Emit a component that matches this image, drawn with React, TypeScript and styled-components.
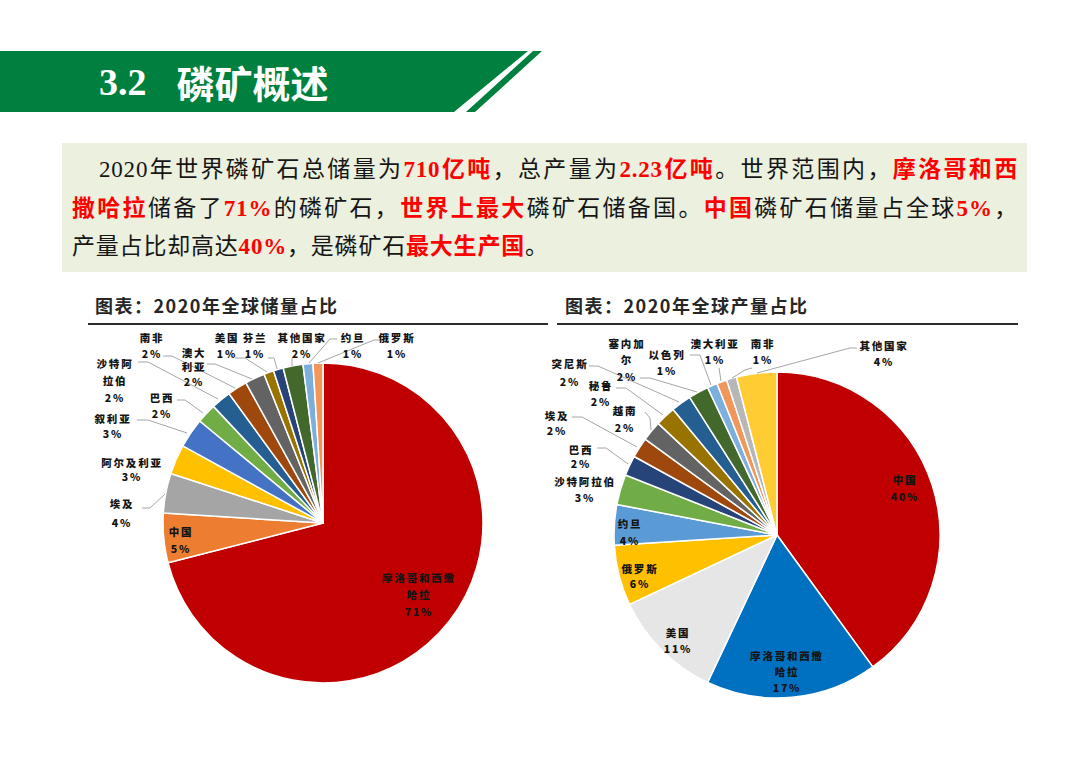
import type { FC } from "react";
import styled, { createGlobalStyle } from "styled-components";

const GlobalStyle = createGlobalStyle`
  html, body {
    margin: 0;
    padding: 0;
    background: #ffffff;
  }
  body {
    width: 1080px;
    height: 764px;
    overflow: hidden;
    font-family: "Noto Sans CJK SC", "Noto Sans", sans-serif;
  }
`;

const Page = styled.div`
  width: 1080px;
  height: 764px;
  display: flex;
  flex-direction: column;
`;

const Banner = styled.div`
  margin-top: 51px;
  width: 545px;
  height: 61px;
  box-sizing: border-box;
  padding-left: 99px;
  display: flex;
  align-items: center;
  gap: 30px;
  background: #00803e;
  color: #ffffff;
  clip-path: polygon(evenodd, 0 0, 528px 0, 454px 100%, 466px 100%, 533px 0, 542px 0, 475px 100%, 0 100%);
`;

const SectionNo = styled.span`
  font-family: "Liberation Serif", serif;
  font-weight: 700;
  font-size: 38px;
  line-height: 1;
`;

const SectionName = styled.span`
  font-family: "Noto Sans CJK SC", sans-serif;
  font-weight: 700;
  font-size: 38px;
  line-height: 1;
`;

const Summary = styled.div`
  margin: 31px 0 0 62px;
  width: 965px;
  height: 129px;
  box-sizing: border-box;
  padding: 8px 9px 0 10px;
  background: #ebf0df;
  font-family: "Liberation Serif", "Noto Sans CJK SC", serif;
  font-size: 23px;
  line-height: 38.5px;
  letter-spacing: 0.8px;
  color: #161616;
`;

const Line = styled.div<{ $indent?: boolean; $full?: boolean }>`
  text-indent: ${p => (p.$indent ? "27px" : "0")};
  text-align: ${p => (p.$full ? "justify" : "left")};
  text-align-last: ${p => (p.$full ? "justify" : "auto")};
`;

const Red = styled.span`
  color: #ff0000;
  font-weight: 700;
`;

const ChartRow = styled.div`
  display: flex;
  gap: 9px;
  margin: 21px 0 0 88px;
`;

const ChartPanel = styled.div<{ $width: number }>`
  width: ${p => p.$width}px;
  display: flex;
  flex-direction: column;
`;

const ChartTitle = styled.div<{ $inset: number }>`
  padding-left: ${p => p.$inset}px;
  font-family: "Noto Sans CJK SC", sans-serif;
  font-weight: 700;
  font-size: 18px;
  line-height: 24px;
  letter-spacing: 1.5px;
  color: #262626;
`;

const Rule = styled.div`
  margin-top: 6px;
  height: 2px;
  background: #2b2b2b;
`;

const PieSvg = styled.svg`
  display: block;
  overflow: visible;
`;

const LabelText = styled.text`
  font-family: "Noto Sans CJK SC", sans-serif;
  font-size: 10.5px;
  font-weight: 900;
  letter-spacing: 1.8px;
  fill: #141414;
`;

type Slice = { value: number; color: string };
type Label = { lines: string[]; x: number; y: number; dy?: number; leader?: [number, number][] };

const point = (cx: number, cy: number, r: number, f: number) => {
  const a = f * 2 * Math.PI;
  return [cx + r * Math.sin(a), cy - r * Math.cos(a)];
};

const slicePath = (cx: number, cy: number, r: number, f0: number, f1: number) => {
  const [x0, y0] = point(cx, cy, r, f0);
  const [x1, y1] = point(cx, cy, r, f1);
  const large = f1 - f0 > 0.5 ? 1 : 0;
  return `M${cx},${cy} L${x0},${y0} A${r},${r} 0 ${large} 1 ${x1},${y1} Z`;
};

interface PieProps {
  x0: number;
  width: number;
  cx: number;
  cy: number;
  r: number;
  slices: Slice[];
  labels: Label[];
}

const TOP = 325;
const HEIGHT = 385;

const Pie: FC<PieProps> = ({ x0, width, cx, cy, r, slices, labels }) => {
  let acc = 0;
  return (
    <PieSvg width={width} height={HEIGHT} viewBox={`${x0} ${TOP} ${width} ${HEIGHT}`}>
      {slices.map((s, i) => {
        const f0 = acc / 100;
        acc += s.value;
        const f1 = acc / 100;
        return <path key={i} d={slicePath(cx, cy, r, f0, f1)} fill={s.color} stroke="#ffffff" strokeWidth={1.5} strokeLinejoin="round" />;
      })}
      {labels.map((l, i) =>
        l.leader ? (
          <polyline key={`l${i}`} points={l.leader.map(p => p.join(",")).join(" ")} fill="none" stroke="#a6a6a6" strokeWidth={1} />
        ) : null
      )}
      {labels.map((l, i) =>
        l.lines.map((t, j) => (
          <LabelText key={`t${i}-${j}`} x={l.x} y={l.y + j * (l.dy ?? 16)} textAnchor="middle" dominantBaseline="central">
            {t}
          </LabelText>
        ))
      )}
    </PieSvg>
  );
};

const reserveSlices: Slice[] = [
  { value: 71, color: "#c00000" },
  { value: 5, color: "#ed7d31" },
  { value: 4, color: "#a5a5a5" },
  { value: 3, color: "#ffc000" },
  { value: 3, color: "#4472c4" },
  { value: 2, color: "#70ad47" },
  { value: 2, color: "#255e91" },
  { value: 2, color: "#9e480e" },
  { value: 2, color: "#636363" },
  { value: 1, color: "#997300" },
  { value: 1, color: "#264478" },
  { value: 2, color: "#43682b" },
  { value: 1, color: "#7cafdd" },
  { value: 1, color: "#f1975a" },
];

const reserveLabels: Label[] = [
  { lines: ["摩洛哥和西撒", "哈拉", "71%"], x: 419, y: 577, dy: 17 },
  { lines: ["中国", "5%"], x: 181, y: 531, dy: 17 },
  { lines: ["埃及", "4%"], x: 122, y: 503, dy: 19, leader: [[142, 508], [150, 508], [165, 494]] },
  { lines: ["阿尔及利亚", "3%"], x: 132, y: 462, dy: 14 },
  { lines: ["叙利亚", "3%"], x: 113, y: 418, dy: 15, leader: [[137, 420], [148, 420], [187, 433]] },
  { lines: ["巴西", "2%"], x: 162, y: 397, dy: 16, leader: [[177, 400], [185, 400], [203, 413]] },
  { lines: ["沙特阿", "拉伯", "2%"], x: 115, y: 363, dy: 17, leader: [[138, 362], [148, 362], [218, 399]] },
  { lines: ["南非", "2%"], x: 152, y: 337, dy: 16, leader: [[163, 356], [172, 356], [235, 388]] },
  { lines: ["澳大", "利亚", "2%"], x: 194, y: 352, dy: 14.5, leader: [[207, 364], [215, 364], [252, 379]] },
  { lines: ["美国", "1%"], x: 227, y: 337, dy: 16, leader: [[235, 358], [245, 358], [267, 372]] },
  { lines: ["芬兰", "1%"], x: 255, y: 337, dy: 16, leader: [[268, 358], [274, 358], [277, 369]] },
  { lines: ["其他国家", "2%"], x: 302, y: 337, dy: 16, leader: [[292, 358], [292, 366]] },
  { lines: ["约旦", "1%"], x: 353, y: 337, dy: 16, leader: [[337, 339], [330, 339], [309, 363]] },
  { lines: ["俄罗斯", "1%"], x: 397, y: 337, dy: 16, leader: [[380, 340], [374, 340], [318, 363]] },
];

const outputSlices: Slice[] = [
  { value: 40, color: "#c00000" },
  { value: 17, color: "#0070c0" },
  { value: 11, color: "#e7e6e6" },
  { value: 6, color: "#ffc000" },
  { value: 4, color: "#5b9bd5" },
  { value: 3, color: "#70ad47" },
  { value: 2, color: "#264478" },
  { value: 2, color: "#9e480e" },
  { value: 2, color: "#636363" },
  { value: 2, color: "#997300" },
  { value: 2, color: "#255e91" },
  { value: 2, color: "#43682b" },
  { value: 1, color: "#7cafdd" },
  { value: 1, color: "#f1975a" },
  { value: 1, color: "#b7b7b7" },
  { value: 4, color: "#ffcd33" },
];

const outputLabels: Label[] = [
  { lines: ["中国", "40%"], x: 905, y: 479, dy: 17 },
  { lines: ["摩洛哥和西撒", "哈拉", "17%"], x: 787, y: 655, dy: 16 },
  { lines: ["美国", "11%"], x: 678, y: 632, dy: 16 },
  { lines: ["俄罗斯", "6%"], x: 640, y: 568, dy: 15 },
  { lines: ["约旦", "4%"], x: 630, y: 523, dy: 17 },
  { lines: ["沙特阿拉伯", "3%"], x: 585, y: 481, dy: 16 },
  { lines: ["巴西", "2%"], x: 581, y: 449, dy: 14, leader: [[597, 448], [606, 448], [628, 464]] },
  { lines: ["埃及", "2%"], x: 557, y: 415, dy: 15, leader: [[572, 417], [582, 417], [637, 447]] },
  { lines: ["越南", "2%"], x: 625, y: 410, dy: 17, leader: [[645, 412], [650, 418], [651, 430]] },
  { lines: ["秘鲁", "2%"], x: 601, y: 385, dy: 16, leader: [[616, 388], [626, 388], [663, 415]] },
  { lines: ["突尼斯", "2%"], x: 570, y: 363, dy: 18, leader: [[589, 366], [598, 366], [679, 402]] },
  { lines: ["塞内加", "尔", "2%"], x: 627, y: 343, dy: 16.5, leader: [[640, 378], [650, 378], [697, 392]] },
  { lines: ["以色列", "1%"], x: 667, y: 354, dy: 16, leader: [[690, 355], [700, 355], [711, 385]] },
  { lines: ["澳大利亚", "1%"], x: 715, y: 343, dy: 16, leader: [[719, 368], [721, 381]] },
  { lines: ["南非", "1%"], x: 763, y: 343, dy: 16, leader: [[752, 368], [745, 370], [732, 378]] },
  { lines: ["其他国家", "4%"], x: 884, y: 345, dy: 16, leader: [[857, 348], [850, 348], [757, 373]] },
];

export default function App() {
  return (
    <Page>
      <GlobalStyle />
      <Banner>
        <SectionNo>3.2</SectionNo>
        <SectionName>磷矿概述</SectionName>
      </Banner>
      <Summary>
        <Line $indent $full>
          2020年世界磷矿石总储量为<Red>710亿吨</Red>，总产量为<Red>2.23亿吨</Red>。世界范围内，<Red>摩洛哥和西</Red>
        </Line>
        <Line $full>
          <Red>撒哈拉</Red>储备了<Red>71%</Red>的磷矿石，<Red>世界上最大</Red>磷矿石储备国。<Red>中国</Red>磷矿石储量占全球<Red>5%</Red>，
        </Line>
        <Line>
          产量占比却高达<Red>40%</Red>，是磷矿石<Red>最大生产国</Red>。
        </Line>
      </Summary>
      <ChartRow>
        <ChartPanel $width={460}>
          <ChartTitle $inset={7}>图表：2020年全球储量占比</ChartTitle>
          <Rule />
          <Pie x0={88} width={460} cx={323} cy={523} r={160} slices={reserveSlices} labels={reserveLabels} />
        </ChartPanel>
        <ChartPanel $width={461}>
          <ChartTitle $inset={8}>图表：2020年全球产量占比</ChartTitle>
          <Rule />
          <Pie x0={557} width={461} cx={777} cy={535} r={163} slices={outputSlices} labels={outputLabels} />
        </ChartPanel>
      </ChartRow>
    </Page>
  );
}
